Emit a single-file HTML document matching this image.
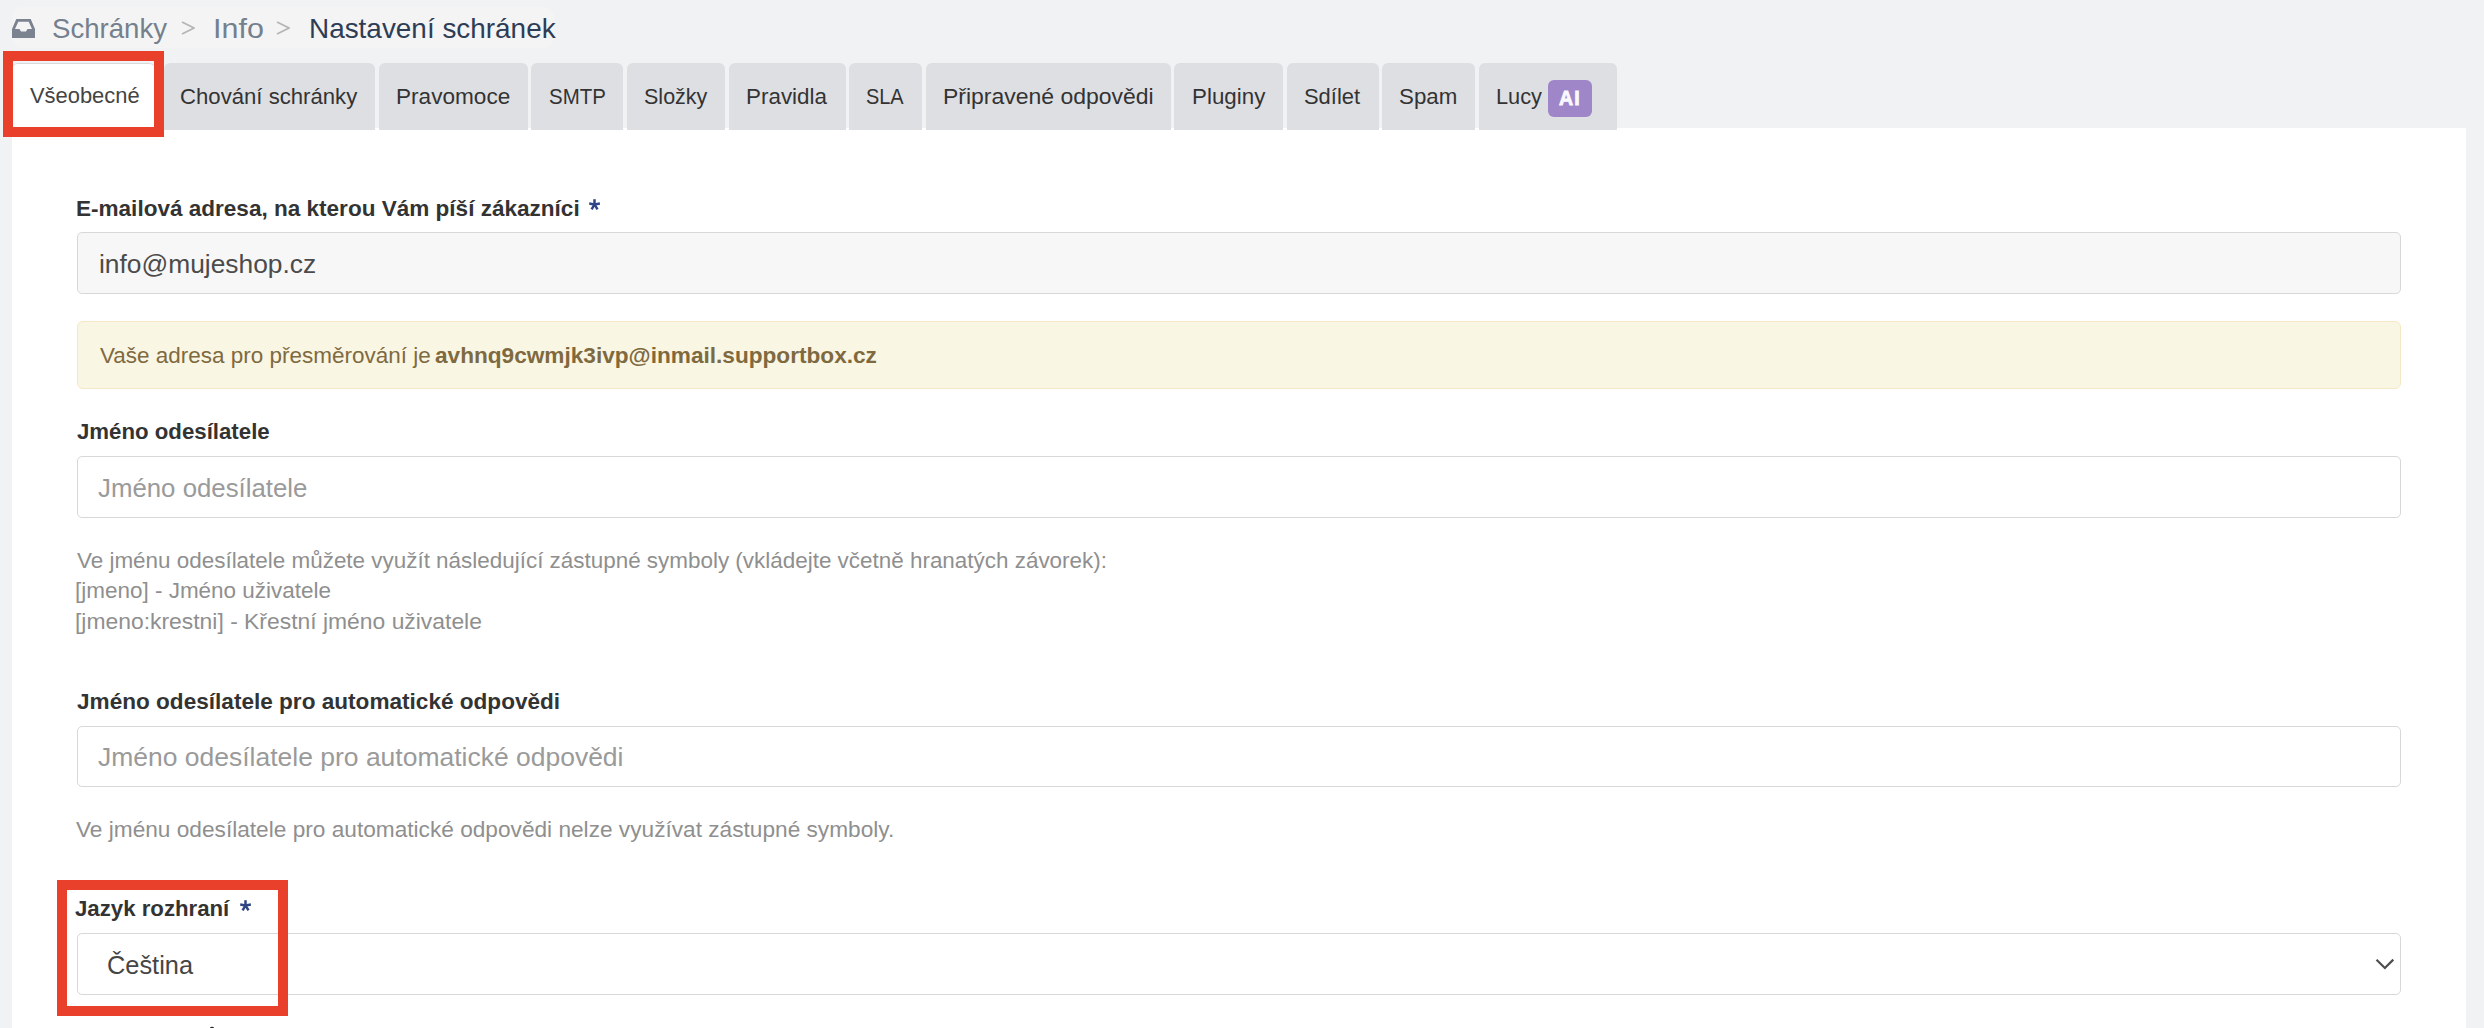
<!DOCTYPE html>
<html><head><meta charset="utf-8"><style>
html,body{margin:0;padding:0;background:#f1f2f4}
body{width:2484px;height:1028px;overflow:hidden;background:#f1f2f4;position:relative;font-family:"Liberation Sans",sans-serif}
.t{position:absolute;white-space:nowrap;line-height:40px;transform-origin:0 50%}
.t b{font-weight:bold}
.bcp{position:absolute;left:12px;top:7px;width:542px;height:41px;background:#f4f4f5;border-radius:10px}
.panel{position:absolute;left:12px;top:128px;width:2454px;height:900px;background:#fff}
.tab{position:absolute;top:63px;height:67px;background:#dedfe3;border-radius:6px 6px 0 0}
.tab.act{background:#fff;border-top:1px solid #d9d9d9;top:63px;height:67px}
.badge{position:absolute;background:#9f86c8;border-radius:6px}
.inp{position:absolute;left:77px;width:2322px;border:1px solid #d8d8d8;border-radius:5px;background:#fff;box-sizing:border-box;width:2324px}
.inp.dis{background:#f7f7f7}
.alert{position:absolute;left:77px;width:2324px;box-sizing:border-box;border:1px solid #f6e8c6;border-radius:6px;background:#faf6e4}
.red{position:absolute;border:10px solid #e8402a}
</style></head><body>
<div class="bcp"></div>
<svg class="ico" style="position:absolute;left:12px;top:19px" width="23" height="19" viewBox="0 0 23 19"><path fill="#7a838f" d="M4.3 0 H18.7 L23 10 V19 H0 V10 Z M6.3 2.7 L3 10 H7.5 L9 12.5 H14 L15.5 10 H20 L16.7 2.7 Z" fill-rule="evenodd"/></svg>
<div class="t" style="left:52.49px;top:9px;font-size:28px;color:#75808d;transform:scaleX(0.9857);">Schránky</div>
<div class="t" style="left:212.59px;top:9px;font-size:28px;color:#75808d;transform:scaleX(1.0882);">Info</div>
<div class="t" style="left:308.60px;top:9px;font-size:28px;color:#2e3d55;transform:scaleX(0.9965);">Nastavení schránek</div>
<svg style="position:absolute;left:181px;top:21px" width="14" height="14" viewBox="0 0 14 14"><path d="M1 1 L13 7 L1 13" fill="none" stroke="#b5b5b5" stroke-width="1.8"/></svg>
<svg style="position:absolute;left:276px;top:21px" width="14" height="14" viewBox="0 0 14 14"><path d="M1 1 L13 7 L1 13" fill="none" stroke="#b5b5b5" stroke-width="1.8"/></svg>
<div class="panel"></div>
<div class="tab act" style="left:12px;width:143px"></div>
<div class="t" style="left:29.57px;top:76px;font-size:22.5px;color:#444;transform:scaleX(0.9736);">Všeobecné</div>
<div class="tab" style="left:164px;width:211px"></div>
<div class="t" style="left:179.62px;top:77px;font-size:22.5px;color:#333;transform:scaleX(0.9843);">Chování schránky</div>
<div class="tab" style="left:379px;width:149px"></div>
<div class="t" style="left:395.57px;top:77px;font-size:22.5px;color:#333;transform:scaleX(1.0040);">Pravomoce</div>
<div class="tab" style="left:531px;width:92px"></div>
<div class="t" style="left:548.68px;top:77px;font-size:22.5px;color:#333;transform:scaleX(0.9093);">SMTP</div>
<div class="tab" style="left:627px;width:98px"></div>
<div class="t" style="left:643.53px;top:77px;font-size:22.5px;color:#333;transform:scaleX(0.9563);">Složky</div>
<div class="tab" style="left:729px;width:117px"></div>
<div class="t" style="left:746.07px;top:77px;font-size:22.5px;color:#333;transform:scaleX(0.9965);">Pravidla</div>
<div class="tab" style="left:849px;width:73px"></div>
<div class="t" style="left:866.23px;top:77px;font-size:22.5px;color:#333;transform:scaleX(0.8854);">SLA</div>
<div class="tab" style="left:926px;width:245px"></div>
<div class="t" style="left:942.70px;top:77px;font-size:22.5px;color:#333;transform:scaleX(1.0210);">Připravené odpovědi</div>
<div class="tab" style="left:1174px;width:109px"></div>
<div class="t" style="left:1191.57px;top:77px;font-size:22.5px;color:#333;transform:scaleX(0.9935);">Pluginy</div>
<div class="tab" style="left:1287px;width:92px"></div>
<div class="t" style="left:1304.45px;top:77px;font-size:22.5px;color:#333;transform:scaleX(0.9742);">Sdílet</div>
<div class="tab" style="left:1382px;width:93px"></div>
<div class="t" style="left:1399.37px;top:77px;font-size:22.5px;color:#333;transform:scaleX(0.9913);">Spam</div>
<div class="tab" style="left:1479px;width:138px"></div>
<div class="t" style="left:1496.48px;top:77px;font-size:22.5px;color:#333;transform:scaleX(0.9676);">Lucy</div>
<div class="badge" style="left:1548px;top:80px;width:44px;height:37px"></div>
<div class="t" style="left:1559.35px;top:78px;font-size:21px;color:#fbf8fd;font-weight:bold;transform:scaleX(0.9299);-webkit-text-stroke:0.9px #fbf8fd;letter-spacing:1.2px;">AI</div>
<div class="t" style="left:76.37px;top:188px;font-size:22.8px;color:#333;font-weight:bold;transform:scaleX(0.9888);">E-mailová adresa, na kterou Vám píší zákazníci</div>
<svg style="position:absolute;left:589px;top:199px" width="12" height="12" viewBox="0 0 12 12"><g stroke="#2f4585" stroke-width="2.5" fill="none"><path d="M5.5 0.2 V5.4"/><path d="M0.2 4.6 L5.5 5.4 L10.9 4.6"/><path d="M2.6 10.3 L5.5 5.4 L8.5 10.3"/></g></svg>
<div class="inp dis" style="top:232px;height:62px"></div>
<div class="t" style="left:98.52px;top:244px;font-size:26px;color:#4b4b4b;transform:scaleX(1.0135);">info@mujeshop.cz</div>
<div class="alert" style="top:321px;height:68px"></div>
<div class="t" style="left:99.51px;top:336px;font-size:22.5px;color:#7f6a3f;transform:scaleX(0.9992);">Vaše adresa pro přesměrování je</div>
<div class="t" style="left:434.73px;top:336px;font-size:22.5px;color:#7f6a3f;font-weight:bold;transform:scaleX(1.0054);">avhnq9cwmjk3ivp@inmail.supportbox.cz</div>
<div class="t" style="left:76.69px;top:411px;font-size:22.8px;color:#333;font-weight:bold;transform:scaleX(0.9748);">Jméno odesílatele</div>
<div class="inp" style="top:456px;height:62px"></div>
<div class="t" style="left:98.44px;top:468px;font-size:26px;color:#9a9a9a;transform:scaleX(0.9926);">Jméno odesílatele</div>
<div class="t" style="left:76.57px;top:541px;font-size:22.5px;color:#8f8f8f;transform:scaleX(0.9970);">Ve jménu odesílatele můžete využít následující zástupné symboly (vkládejte včetně hranatých závorek):</div>
<div class="t" style="left:75.48px;top:571px;font-size:22.5px;color:#8f8f8f;transform:scaleX(0.9987);">[jmeno] - Jméno uživatele</div>
<div class="t" style="left:75.36px;top:602px;font-size:22.5px;color:#8f8f8f;transform:scaleX(1.0169);">[jmeno:krestni] - Křestní jméno uživatele</div>
<div class="t" style="left:76.69px;top:681px;font-size:22.8px;color:#333;font-weight:bold;transform:scaleX(0.9906);">Jméno odesílatele pro automatické odpovědi</div>
<div class="inp" style="top:726px;height:61px"></div>
<div class="t" style="left:98.38px;top:737px;font-size:26px;color:#9a9a9a;transform:scaleX(1.0184);">Jméno odesílatele pro automatické odpovědi</div>
<div class="t" style="left:76.49px;top:810px;font-size:22.5px;color:#8f8f8f;transform:scaleX(1.0070);">Ve jménu odesílatele pro automatické odpovědi nelze využívat zástupné symboly.</div>
<div class="t" style="left:74.69px;top:888px;font-size:22.8px;color:#333;font-weight:bold;transform:scaleX(0.9742);">Jazyk rozhraní</div>
<svg style="position:absolute;left:240px;top:900px" width="12" height="12" viewBox="0 0 12 12"><g stroke="#2f4585" stroke-width="2.5" fill="none"><path d="M5.5 0.2 V5.4"/><path d="M0.2 4.6 L5.5 5.4 L10.9 4.6"/><path d="M2.6 10.3 L5.5 5.4 L8.5 10.3"/></g></svg>
<div class="inp" style="top:933px;height:62px"></div>
<div class="t" style="left:106.51px;top:945px;font-size:26px;color:#454545;transform:scaleX(0.9758);">Čeština</div>
<svg style="position:absolute;left:2375px;top:957px" width="20" height="14" viewBox="0 0 20 14"><path d="M1.5 2.7 L9.9 11 L18.3 2.6" fill="none" stroke="#4f4f4f" stroke-width="2.2"/></svg>
<div style="position:absolute;left:210px;top:1027px;width:4px;height:1px;background:#2a2a2a;border-radius:1px 1px 0 0"></div>
<div style="position:absolute;left:211px;top:1026px;width:2px;height:1px;background:#d8d8d8"></div>
<div class="red" style="left:3px;top:51px;width:141px;height:66px"></div>
<div class="red" style="left:57px;top:880px;width:211px;height:116px"></div>
</body></html>
